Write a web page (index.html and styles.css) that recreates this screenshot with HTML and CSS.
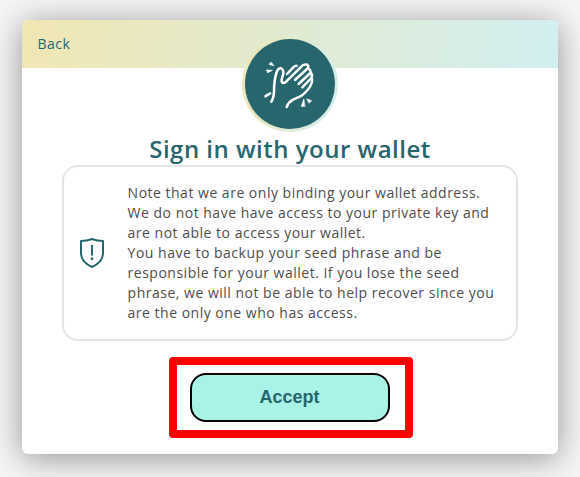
FILE: index.html
```html
<!DOCTYPE html>
<html lang="en">
<head>
<meta charset="utf-8">
<title>Sign in with your wallet</title>
<link rel="stylesheet" href="styles.css">
</head>
<body>
<main class="card">
  <header class="bar">
    <a class="back">Back</a>
    <div class="badge">
      <svg class="hands" viewBox="30 27 270 270" fill="none" stroke="#fff" stroke-width="7.5" stroke-linecap="round" stroke-linejoin="round">
        <path d="M109 215Q116 205 117 185Q117 150 125 126Q130 114 138 115Q146 118 145 131L140 148Q138 163 151 157L199 110Q204 102 217 104Q223 108 217 116L180 150"/>
        <path d="M156 132L175 112Q179 107 185 107"/>
        <path d="M218 115Q229 119 226 129L191 162M227 128Q234 134 229 144L202 172M230 143Q234 153 225 170Q212 190 196 199L174 209Q160 217 155 231"/>
        <path d="M91 199L105 190"/>
        <path class="spark" d="M108 97L102 103L116 107Z M95 120L112 121L99 128Z M206 208L199 229L209 229Z M216 207L230 212L223 219Z"/>
      </svg>
    </div>
  </header>
  <h1 class="title">Sign in with your wallet</h1>
  <section class="notice">
    <svg class="shield" viewBox="0 0 26 32" fill="none" stroke="#28666e" stroke-width="2" stroke-linejoin="round">
      <path d="M13 2Q18 4 24 4V16Q24 25 13 30Q2 25 2 16V4Q8 4 13 2Z"/>
      <path d="M13 8V18.5"/>
      <circle cx="13" cy="21.7" r="1.4" fill="#28666e" stroke="none"/>
    </svg>
    <p class="text">Note that we are only binding your wallet address.<br>We do not have have access to your private key and<br>are not able to access your wallet.<br>You have to backup your seed phrase and be<br>responsible for your wallet. If you lose the seed<br>phrase, we will not be able to help recover since you<br>are the only one who has access.</p>
  </section>
  <div class="highlight"><button class="accept">Accept</button></div>
</main>
</body>
</html>
```
FILE: styles.css
```css
* { box-sizing: border-box; }
body {
  margin: 0;
  height: 477px;
  overflow: hidden;
  padding: 20px 22px;
  background: #f5f5f5;
  font-family: "Open Sans", sans-serif;
  letter-spacing: 0.5px;
}
.card {
  height: 434px;
  border-radius: 6px;
  background: #fff;
  box-shadow: 0 4px 32px rgba(0, 0, 0, 0.4);
}
.bar {
  position: relative;
  display: flex;
  align-items: center;
  height: 48px;
  padding: 0 15.5px 2px;
  border-radius: 6px 6px 0 0;
  background: linear-gradient(100deg, #f0e6b2, #d2eff1);
}
.back { font-size: 14px; color: #28666e; }
.badge {
  position: absolute;
  top: 16px;
  left: 220px;
  width: 96px;
  height: 96px;
  padding: 3px;
  border-radius: 50%;
  background: linear-gradient(100deg, #f0e6b2, #d2eff1);
}
.hands {
  display: block;
  width: 90px;
  height: 90px;
  border-radius: 50%;
  background: #28666e;
}
.spark { fill: #fff; stroke-width: 2; }
.title {
  margin: 64px 0 0;
  height: 33px;
  font-size: 24px;
  line-height: 33px;
  font-weight: 600;
  letter-spacing: 0.5px;
  text-align: center;
  color: #28666e;
}
.notice {
  display: flex;
  align-items: center;
  gap: 22.6px;
  height: 176px;
  margin: 0 40px;
  padding: 0 15px;
  border: 2px solid #e5e5e5;
  border-radius: 16px;
}
.shield { flex: none; width: 26px; height: 32px; }
.text {
  margin: 0;
  font-size: 14px;
  line-height: 20px;
  color: #4d4d4d;
  white-space: nowrap;
}
.highlight {
  width: 244px;
  height: 81px;
  margin: 16px 0 0 147px;
  padding: 8px 13px;
  border: 8px solid #f00;
  border-radius: 4px;
}
.accept {
  display: block;
  width: 200px;
  height: 49px;
  padding: 0 1px 0 0;
  border: 2px solid #000;
  border-radius: 16px;
  background: #a9f2e6;
  color: #28666e;
  font: bold 18px "Liberation Sans", sans-serif;
}
```
